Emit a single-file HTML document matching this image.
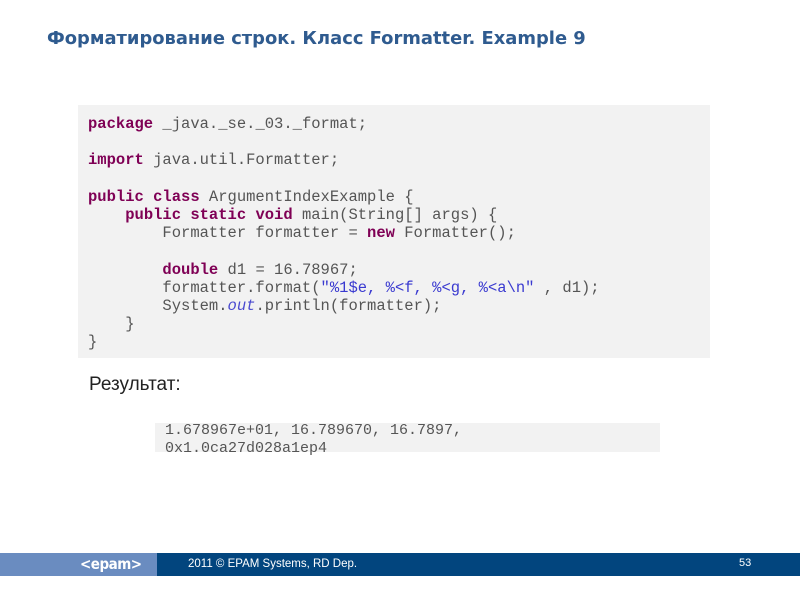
<!DOCTYPE html>
<html><head><meta charset="utf-8"><style>
body{margin:0;width:800px;height:600px;background:#fff;position:relative;overflow:hidden;font-family:"Liberation Sans",sans-serif}
.t{position:absolute;left:47px;top:28px;font:bold 17.9px "DejaVu Sans",sans-serif;color:#2f5b8f;white-space:nowrap}
.code{position:absolute;left:78px;top:105px;width:632px;height:253px;background:#f2f2f2}
pre{margin:0;font-family:"Liberation Mono",monospace;color:#555;white-space:pre}
.k{color:#7f0055;font-weight:bold}
.s{color:#3a3ad0}
.i{font-style:italic;color:#4a4ad0}
.r{position:absolute;left:89px;top:374px;font-size:19px;color:#222}
.res{position:absolute;left:155px;top:423px;width:505px;height:29px;background:#f2f2f2}
.fl{position:absolute;left:0;top:553px;width:157px;height:23px;background:#6a8cc0}
.fd{position:absolute;left:157px;top:553px;width:643px;height:23px;background:#02457e}
.logo{position:absolute;left:80px;top:555px;color:#fff;font:bold 15px "DejaVu Sans Condensed","DejaVu Sans",sans-serif;letter-spacing:-0.5px}
.ft{position:absolute;left:188px;top:558px;color:#fff;font-size:11.5px}
.pn{position:absolute;left:739px;top:557px;color:#fff;font-size:11px}
</style></head><body>
<div class="t">Форматирование строк. Класс Formatter. Example 9</div>
<div class="code"></div>
<pre style="position:absolute;left:88px;top:115px;font-size:15.5px;line-height:18.2px"><span class="k">package</span> _java._se._03._format;

<span class="k">import</span> java.util.Formatter;

<span class="k">public class</span> ArgumentIndexExample {
    <span class="k">public static void</span> main(String[] args) {
        Formatter formatter = <span class="k">new</span> Formatter();

        <span class="k">double</span> d1 = 16.78967;
        formatter.format(<span class="s">"%1$e, %&lt;f, %&lt;g, %&lt;a\n"</span> , d1);
        System.<span class="i">out</span>.println(formatter);
    }
}</pre>
<div class="r">Результат:</div>
<div class="res"></div>
<pre style="position:absolute;left:165px;top:422px;font-size:15px;line-height:18px">1.678967e+01, 16.789670, 16.7897,
0x1.0ca27d028a1ep4</pre>
<div class="fl"></div><div class="fd"></div>
<div class="logo">&lt;epam&gt;</div>
<div class="ft">2011 © EPAM Systems, RD Dep.</div>
<div class="pn">53</div>
</body></html>
